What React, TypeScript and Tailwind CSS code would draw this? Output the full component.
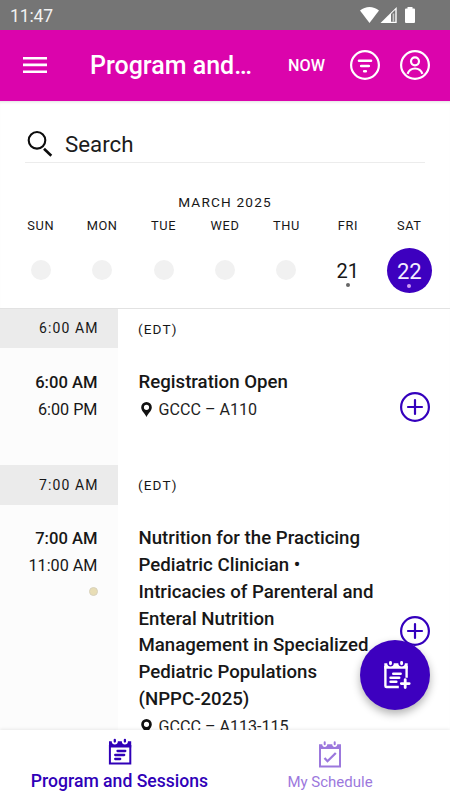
import type { ReactNode } from 'react';

const weekdays = ['SUN', 'MON', 'TUE', 'WED', 'THU', 'FRI', 'SAT'];

interface Session {
  slot: string;
  start: string;
  end: string;
  title: string[];
  location: string;
  track?: boolean;
}

const sessions: Session[] = [
  {
    slot: '6:00 AM',
    start: '6:00 AM',
    end: '6:00 PM',
    title: ['Registration Open'],
    location: 'GCCC – A110',
  },
  {
    slot: '7:00 AM',
    start: '7:00 AM',
    end: '11:00 AM',
    title: [
      'Nutrition for the Practicing',
      'Pediatric Clinician •',
      'Intricacies of Parenteral and',
      'Enteral Nutrition',
      'Management in Specialized',
      'Pediatric Populations',
      '(NPPC-2025)',
    ],
    location: 'GCCC – A113-115',
    track: true,
  },
];

function StatusBar() {
  return (
    <div className="flex h-[30px] shrink-0 items-center justify-between bg-[#757575] pl-[10px] pr-[34px] text-white">
      <span className="mt-[2px] text-[17.5px] leading-[30px] tracking-[-0.1px] text-[#f1f1f1]">11:47</span>
      <svg width="56" height="18" viewBox="0 0 56 18" fill="currentColor">
        <path d="M0 4.6C5.5-.2 13.5-.2 19 4.6L9.500 17z" />
        <path d="M36.700 1V17H20.500z" />
        <path d="M31 8L35.300 3.800V15.700H31z" fill="#757575" />
        <path d="M32.600 7.500h1.600v8.200h-1.600z" fill="#c8c8c8" />
        <path d="M47.500 1h5v1.500h1.500a1 1 0 0 1 1 1V16a1 1 0 0 1-1 1H46a1 1 0 0 1-1-1V3.500a1 1 0 0 1 1-1h1.500z" />
      </svg>
    </div>
  );
}

function Header() {
  return (
    <header className="flex h-[71px] shrink-0 items-center bg-[#db04ac] pb-px pl-[23px] pr-5 text-white">
      <svg width="24" height="18" viewBox="0 0 24 18" fill="none" stroke="currentColor" strokeWidth="2.600">
        <path d="M0 2.200h24M0 8.900h24M0 15.700h24" />
      </svg>
      <h1 className="ml-[43px] mt-px w-[198px] whitespace-nowrap text-[25px] font-medium">Program and…</h1>
      <span className="mt-[3px] w-[62px] text-[16.2px] font-medium">NOW</span>
      <svg className="mr-5" width="30" height="30" viewBox="0 0 30 30" fill="none" stroke="currentColor" strokeWidth="2.200" strokeLinecap="round">
        <circle cx="15" cy="15" r="13.900" />
        <path d="M9 10.700h12M11.200 16h7.600M14.200 21.200h1.600" strokeWidth="2.600" />
      </svg>
      <svg width="30" height="30" viewBox="0 0 30 30" fill="none" stroke="currentColor" strokeWidth="2.200">
        <circle cx="15" cy="15" r="13.900" />
        <circle cx="15" cy="11.300" r="4" />
        <path d="M7.600 23.800c1.200-3.500 4-5.300 7.400-5.300s6.200 1.800 7.400 5.300" />
      </svg>
    </header>
  );
}

function SearchField() {
  return (
    <div className="mx-[25px] flex h-[62px] items-end border-b border-[#ececec]">
      <svg className="mb-[4px] ml-[2px]" width="26" height="28" viewBox="0 0 26 28" fill="none" stroke="#0c0c0c" strokeWidth="2.100">
        <circle cx="10" cy="10.300" r="8.300" />
        <path d="M17 18.800l7.300 7" strokeWidth="2.600" />
      </svg>
      <span className="mb-[2px] ml-[12px] text-[22.300px] leading-[32px] text-[#1c1c1c]">Search</span>
    </div>
  );
}

function Calendar() {
  return (
    <div className="flex h-[146px] flex-col border-b border-[#e2e2e2]">
      <div className="mt-[29px] text-center text-[13.600px] leading-5 tracking-[1.2px]">MARCH 2025</div>
      <div className="mx-[10px] mt-[4px] grid grid-cols-7 text-center text-[12.800px] leading-5 tracking-[0.600px]">
        {weekdays.map((day) => (
          <span key={day}>{day}</span>
        ))}
      </div>
      <div className="mx-[10px] mt-[11px] grid h-[46px] grid-cols-7 items-center justify-items-center">
        {weekdays.slice(0, 5).map((day) => (
          <span key={day} className="size-5 rounded-full bg-[#f1f1f1]" />
        ))}
        <Day date="21" />
        <Day date="22" selected />
      </div>
    </div>
  );
}

function Day({ date, selected }: { date: string; selected?: boolean }) {
  return (
    <div className={selected ? 'flex size-[45px] flex-col items-center rounded-full bg-[#3d00bf] text-[#f3edff]' : 'flex size-[45px] flex-col items-center'}>
      <span className={selected ? 'mt-[10px] text-[22px] leading-[27px]' : 'mt-[10px] text-[20px] leading-[27px]'}>{date}</span>
      <span className={selected ? 'mt-[-1px] size-1 rounded-full bg-[#cf9cf5]' : 'mt-[-2px] size-1 rounded-full bg-[#666]'} />
    </div>
  );
}

function Location({ children }: { children: ReactNode }) {
  return (
    <div className="mt-px flex h-[27px] items-center text-[16.100px] text-[#1f1f1f]">
      <svg className="mb-px ml-[2px] mr-[7px]" width="11" height="15" viewBox="0 0 11 15" fill="#111">
        <path fillRule="evenodd" d="M5.500 0A5.300 5.300 0 0 0 .2 5.300C.2 9 3.600 11 5.500 15 7.400 11 10.800 9 10.800 5.300A5.300 5.300 0 0 0 5.500 0zm0 2.700a2.600 2.600 0 1 1 0 5.200 2.600 2.600 0 0 1 0-5.200z" />
      </svg>
      <span>{children}</span>
    </div>
  );
}

function SessionRow({ session }: { session: Session }) {
  return (
    <section>
      <div className="flex h-[39.400px] items-center text-[14px] tracking-[1.100px]">
        <span className="flex h-full w-[117.500px] items-center justify-end bg-[#ebebeb] pr-[19px]">{session.slot}</span>
        <span className="ml-[20.500px] text-[13.600px]">(EDT)</span>
      </div>
      <div className="flex min-h-[117px]">
        <div className="w-[117.500px] bg-[#fcfcfc] pr-[20px] pt-[20.600px] text-right text-[16.200px] leading-[27px]">
          <div className="text-[16.600px] font-medium">{session.start}</div>
          <div>{session.end}</div>
          {session.track && <div className="ml-auto mt-[8px] size-[9px] rounded-full border border-[#d8d2bd] bg-[#e8ddb5]" />}
        </div>
        <div className="w-[250px] pb-[17.500px] pl-[21px] pt-[20.700px]">
          <h2 className="whitespace-nowrap text-[18.650px] font-medium leading-[26.700px]">
            {session.title.map((line) => (
              <span key={line} className="block">{line}</span>
            ))}
          </h2>
          <Location>{session.location}</Location>
        </div>
        <svg className="ml-[32px] self-center" width="30" height="30" viewBox="0 0 30 30" fill="none" stroke="#3400bd" strokeWidth="2.200">
          <circle cx="15" cy="15" r="13.900" />
          <path d="M15 8v14M8 15h14" strokeLinecap="round" />
        </svg>
      </div>
    </section>
  );
}

function AddButton() {
  return (
    <button className="absolute left-[360px] top-[640px] flex size-[70px] items-center justify-center rounded-full bg-[#3d00bf] text-white shadow-[0_4px_9px_rgba(0,0,0,0.3)]">
      <svg className="ml-[3px]" width="28" height="30" viewBox="0 0 28 30" fill="none" stroke="currentColor" strokeWidth="2.400">
        <path d="M23.600 17.800V6M15.800 27H3.400a1 1 0 0 1-1-1V6" />
        <path d="M1.300 3.200H4.200C4.300 5.600 5.600 6.500 7.500 6.500S10.700 5.600 10.800 3.200H15.300C15.400 5.600 16.700 6.500 18.600 6.500S21.800 5.600 21.900 3.200H24.700V8.800H1.300z" fill="currentColor" stroke="none" />
        <path d="M7.500 2.500v1.200M18.600 2.500v1.200" strokeLinecap="round" strokeWidth="2.900" />
        <path d="M10.300 13.700h7.300M7.600 17.700h8.600M7.600 21.700h5.700" strokeLinecap="round" strokeWidth="2.600" />
        <path d="M22.200 19.600v8M18.300 23.600h7.900" strokeLinecap="round" strokeWidth="2.800" />
      </svg>
    </button>
  );
}

function BottomNav() {
  return (
    <nav className="relative flex h-[70px] shrink-0 bg-white shadow-[0_-1px_3px_rgba(0,0,0,0.08)]">
      <div className="flex w-[239px] flex-col items-center text-[#3000b8]">
        <svg className="mt-[8px]" width="24" height="28" viewBox="0 0 24 28" fill="none" stroke="currentColor" strokeWidth="2">
          <path d="M1.900 7v18.600h20.400V7" />
          <path d="M1 3.200H3.700C3.800 5.600 5 6.400 6.800 6.400S9.800 5.600 9.900 3.200H13.800C13.900 5.600 15.100 6.400 16.900 6.400S19.900 5.600 20 3.200H23.200V9.500H1z" fill="currentColor" stroke="none" />
          <path d="M6.800 2v1.600M16.900 2v1.600" strokeLinecap="round" strokeWidth="2.300" />
          <path d="M9.500 13h7.800M7.200 17h9M7.200 21h5" strokeLinecap="round" strokeWidth="2.300" />
        </svg>
        <span className="mt-[3px] text-[17.600px] font-medium leading-6">Program and Sessions</span>
      </div>
      <div className="ml-[1px] flex w-[180px] flex-col items-center text-[#9c78dd]">
        <svg className="mt-[10px]" width="24" height="28" viewBox="0 0 24 28" fill="none" stroke="currentColor" strokeWidth="2">
          <path d="M2 8v18.500h20V8" />
          <path d="M1 4.300H4.200C4.400 6.300 5.300 7 6.700 7S9.100 6.300 9.300 4.300H14.200C14.400 6.300 15.300 7 16.700 7S19.100 6.300 19.300 4.300H23V9H1z" fill="currentColor" stroke="none" />
          <path d="M6.700 2.300v2M16.700 2.300v2" strokeLinecap="round" strokeWidth="2" />
          <path d="M6.500 18l3 3.200L17.800 13" strokeWidth="2.300" />
        </svg>
        <span className="mt-[2px] text-[15px] leading-6">My Schedule</span>
      </div>
    </nav>
  );
}

export default function App() {
  return (
    <div className="relative flex h-[800px] w-[450px] flex-col overflow-hidden bg-white font-['Roboto',sans-serif] text-[#171717]">
      <StatusBar />
      <Header />
      <main className="min-h-0 flex-1 overflow-hidden shadow-[inset_0_3px_3px_-2px_rgba(0,0,0,0.12)]">
        <SearchField />
        <Calendar />
        {sessions.map((session) => (
          <SessionRow key={session.slot} session={session} />
        ))}
      </main>
      <BottomNav />
      <AddButton />
    </div>
  );
}
